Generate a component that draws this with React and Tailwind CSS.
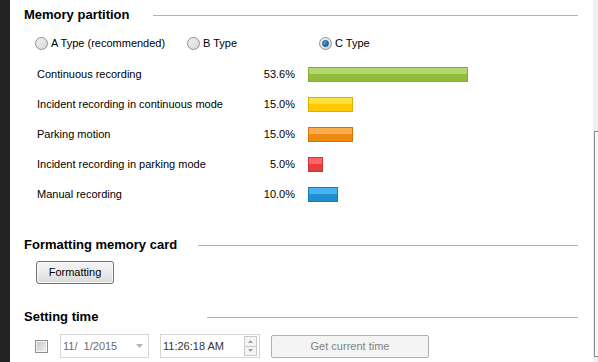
import React from "react";

const font = { fontFamily: '"Liberation Sans", Arial, sans-serif' };

function Heading({ children, lineMl }) {
  return (
    <div className="flex items-center h-[16px]">
      <span className="text-[13px] font-bold text-black leading-[16px] whitespace-nowrap">{children}</span>
      <div className={`flex-1 h-px bg-[#a7b5c6] ${lineMl}`} />
    </div>
  );
}

function Radio({ checked }) {
  return (
    <span className="relative inline-flex w-[13px] h-[13px] rounded-full border border-[#8e9194] bg-gradient-to-br from-[#f4f4f4] to-[#d4d4d4] items-center justify-center">
      {checked && (
        <span className="w-[7px] h-[7px] rounded-full bg-gradient-to-br from-[#5fb4ea] to-[#0b5a96] border border-[#0f4f80]" />
      )}
    </span>
  );
}

const rows = [
  { label: "Continuous recording", pct: "53.6%", w: "w-[160px]", top: "bg-[#b2d76a]", bot: "bg-[#94bc3b]", c: "border-[#86ab3a]" },
  { label: "Incident recording in continuous mode", pct: "15.0%", w: "w-[45px]", top: "bg-[#ffe13e]", bot: "bg-[#ffc800]", c: "border-[#e0ae00]" },
  { label: "Parking motion", pct: "15.0%", w: "w-[45px]", top: "bg-[#fbac4f]", bot: "bg-[#ee8a12]", c: "border-[#d8700e]" },
  { label: "Incident recording in parking mode", pct: "5.0%", w: "w-[15px]", top: "bg-[#ff6366]", bot: "bg-[#e63d3d]", c: "border-[#cf3434]" },
  { label: "Manual recording", pct: "10.0%", w: "w-[30px]", top: "bg-[#46b6f2]", bot: "bg-[#2190d0]", c: "border-[#1f78b0]" },
];

export default function App() {
  return (
    <div className="flex w-[598px] h-[362px] overflow-hidden bg-white text-[11px] text-black" style={font}>
      <div className="w-[10px] bg-[#232323] shrink-0" />
      <div className="flex-1 flex flex-col pl-[14px] pr-[15px] pt-[7px]">
        <Heading lineMl="ml-[24px]">Memory partition</Heading>

        <div className="flex items-center h-[16px] mt-[12px] pl-[11px]">
          <div className="w-[152px] flex items-center gap-[3px]">
            <Radio />
            <span>A Type (recommended)</span>
          </div>
          <div className="w-[132px] flex items-center gap-[3px]">
            <Radio />
            <span>B Type</span>
          </div>
          <div className="flex items-center gap-[3px]">
            <Radio checked />
            <span>C Type</span>
          </div>
        </div>

        <div className="flex flex-col mt-[8px] pl-[13px]">
          {rows.map((r) => (
            <div key={r.label} className="flex items-center h-[30px]">
              <span className="w-[218px] whitespace-nowrap">{r.label}</span>
              <span className="w-[40px] text-right">{r.pct}</span>
              <div className={`ml-[13px] ${r.w} h-[15px] border ${r.c} flex flex-col`}>
                <div className={`flex-1 ${r.top}`} />
                <div className={`flex-1 ${r.bot}`} />
              </div>
            </div>
          ))}
        </div>

        <div className="mt-[28px]">
          <Heading lineMl="ml-[21px]">Formatting memory card</Heading>
        </div>

        <div className="mt-[8px] pl-[12px]">
          <button className="w-[78px] h-[23px] rounded-[3px] border border-[#707070] bg-gradient-to-b from-[#f3f3f3] via-[#ebebeb] to-[#d9d9d9] text-[11px] text-black shadow-[inset_0_0_0_1px_#fbfbfb]" style={font}>
            Formatting
          </button>
        </div>

        <div className="mt-[25px]">
          <Heading lineMl="ml-[109px]">Setting time</Heading>
        </div>

        <div className="flex items-center h-[24px] mt-[9px] pl-[11px]">
          <span className="w-[13px] h-[13px] border border-[#8f8f8f] bg-[#f4f4f4] flex items-center justify-center">
            <span className="w-[9px] h-[9px] bg-gradient-to-br from-[#c9c9c9] to-[#f0f0f0]" />
          </span>
          <div className="ml-[12px] w-[89px] h-[24px] border border-[#d5d5d5] flex items-center pl-[2px] text-[#6d6d6d]">
            <span className="flex-1 whitespace-pre">11/  1/2015</span>
            <svg width="8" height="5" viewBox="0 0 8 5" className="mr-[4px]">
              <path d="M0 0 L7 0 L3.5 4 Z" fill="#b5b5b5" />
            </svg>
          </div>
          <div className="ml-[11px] w-[100px] h-[24px] border border-[#d5d5d5] flex items-center pl-[2px] text-[#333]">
            <span className="flex-1">11:26:18 AM</span>
            <div className="flex flex-col mr-[2px] w-[13px] h-[20px]">
              <div className="flex-1 border border-[#c8c8c8] bg-[#f4f4f4] flex items-center justify-center">
                <svg width="5" height="3" viewBox="0 0 5 3"><path d="M0 3 L5 3 L2.5 0 Z" fill="#a0a0a0" /></svg>
              </div>
              <div className="flex-1 border border-t-0 border-[#c8c8c8] bg-[#f4f4f4] flex items-center justify-center">
                <svg width="5" height="3" viewBox="0 0 5 3"><path d="M0 0 L5 0 L2.5 3 Z" fill="#a0a0a0" /></svg>
              </div>
            </div>
          </div>
          <button className="ml-[11px] w-[158px] h-[23px] rounded-[2px] border border-[#adb2b5] bg-[#f4f4f4] text-[11px] text-[#838383]" style={font}>
            Get current time
          </button>
        </div>
      </div>
      <div className="w-[5px] shrink-0 bg-[#f0f0f0] flex flex-col">
        <div className="mt-[131px] h-[226px] ml-[1px] border border-r-0 border-[#8a8a8a] bg-[#f7f7f7]" />
      </div>
    </div>
  );
}
